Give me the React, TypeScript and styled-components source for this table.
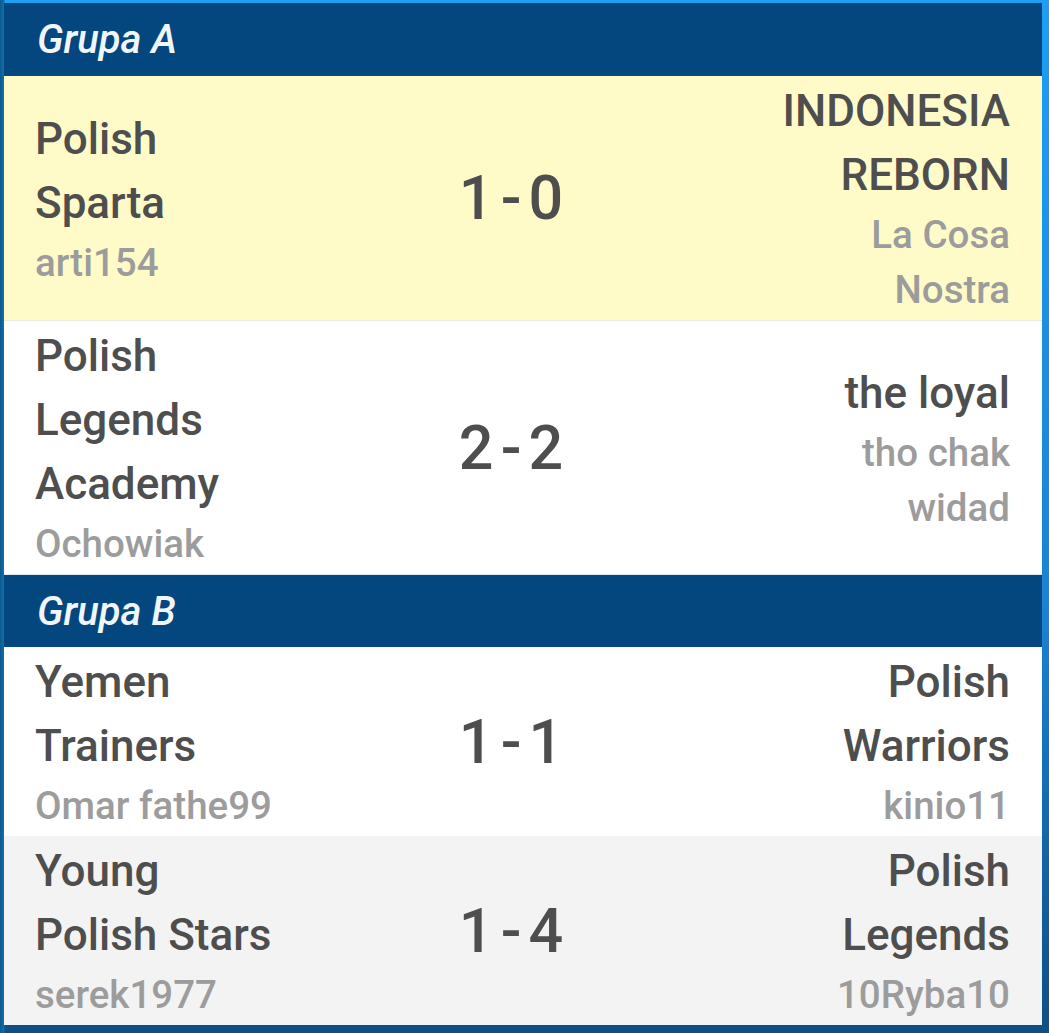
import React, { FC } from "react";
import styled, { createGlobalStyle } from "styled-components";

const GlobalStyle = createGlobalStyle`
  html, body {
    margin: 0;
    padding: 0;
  }
  body {
    background: linear-gradient(165deg, #22a4f7 0%, #1690e2 35%, #0f6fb8 70%, #0b4677 100%);
    font-family: Roboto, "Liberation Sans", sans-serif;
  }
`;

const Frame = styled.div`
  width: 1049px;
  height: 1033px;
  box-sizing: border-box;
  padding: 3px 7px 7px 4px;
  background: linear-gradient(90deg, #0b5a8c 0px, #0e6fae 4px, transparent 5px),
    linear-gradient(180deg, #1d9ff4 0%, #1783d4 60%, #0d4f86 100%);
`;

const Board = styled.div`
  display: flex;
  flex-direction: column;
  background: #ffffff;
`;

const GroupHeader = styled.div<{ gap?: boolean }>`
  display: flex;
  align-items: center;
  height: ${(p) => (p.gap ? "72px" : "73px")};
  padding: 0 33px;
  background: #04477f;
  border-top: ${(p) => (p.gap ? "1px solid #dbe9f2" : "none")};
  color: #f1f6fa;
  font-size: 40px;
  font-weight: 500;
  font-style: italic;
`;

const Match = styled.div<{ bg: string; line?: boolean }>`
  display: grid;
  grid-template-columns: 252px 1fr 252px;
  align-items: center;
  padding: 3px 32px 3px 31px;
  background: ${(p) => p.bg};
  border-bottom: ${(p) => (p.line ? "1px solid #ecebd9" : "none")};
`;

const Side = styled.div<{ right?: boolean }>`
  display: flex;
  flex-direction: column;
  text-align: ${(p) => (p.right ? "right" : "left")};
`;

const Team = styled.div`
  font-size: 44px;
  line-height: 64px;
  font-weight: 500;
  color: #4e4e4e;
`;

const Owner = styled.div`
  font-size: 38.5px;
  line-height: 55px;
  font-weight: 500;
  color: #9c9c9c;
`;

const Score = styled.div`
  justify-self: center;
  padding-right: 23px;
  font-size: 61px;
  font-weight: 500;
  word-spacing: -8px;
  color: #4e4e4e;
  white-space: nowrap;
`;

interface Game {
  home: string[];
  homeOwner: string[];
  away: string[];
  awayOwner: string[];
  score: string;
  bg: string;
  line?: boolean;
}

const groupA: Game[] = [
  {
    home: ["Polish", "Sparta"],
    homeOwner: ["arti154"],
    away: ["INDONESIA", "REBORN"],
    awayOwner: ["La Cosa", "Nostra"],
    score: "1 - 0",
    bg: "#fffbc9",
    line: true,
  },
  {
    home: ["Polish", "Legends", "Academy"],
    homeOwner: ["Ochowiak"],
    away: ["the loyal"],
    awayOwner: ["tho chak", "widad"],
    score: "2 - 2",
    bg: "#ffffff",
  },
];

const groupB: Game[] = [
  {
    home: ["Yemen", "Trainers"],
    homeOwner: ["Omar fathe99"],
    away: ["Polish", "Warriors"],
    awayOwner: ["kinio11"],
    score: "1 - 1",
    bg: "#ffffff",
  },
  {
    home: ["Young", "Polish Stars"],
    homeOwner: ["serek1977"],
    away: ["Polish", "Legends"],
    awayOwner: ["10Ryba10"],
    score: "1 - 4",
    bg: "#f3f3f3",
  },
];

const MatchRow: FC<{ game: Game }> = ({ game }) => (
  <Match bg={game.bg} line={game.line}>
    <Side>
      {game.home.map((t) => (
        <Team key={t}>{t}</Team>
      ))}
      {game.homeOwner.map((t) => (
        <Owner key={t}>{t}</Owner>
      ))}
    </Side>
    <Score>{game.score}</Score>
    <Side right>
      {game.away.map((t) => (
        <Team key={t}>{t}</Team>
      ))}
      {game.awayOwner.map((t) => (
        <Owner key={t}>{t}</Owner>
      ))}
    </Side>
  </Match>
);

const App: FC = () => (
  <>
    <GlobalStyle />
    <Frame>
      <Board>
        <GroupHeader>Grupa A</GroupHeader>
        {groupA.map((g) => (
          <MatchRow key={g.score} game={g} />
        ))}
        <GroupHeader gap>Grupa B</GroupHeader>
        {groupB.map((g) => (
          <MatchRow key={g.score} game={g} />
        ))}
      </Board>
    </Frame>
  </>
);

export default App;
